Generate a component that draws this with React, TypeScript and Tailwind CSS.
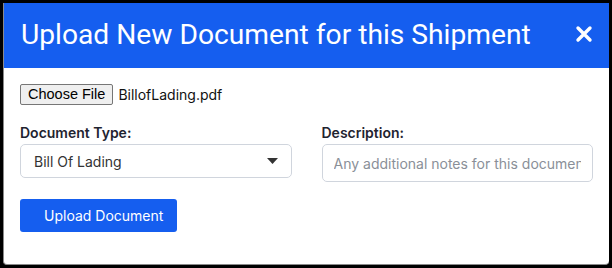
import React from 'react';

export default function App() {
    return (
        <div className="w-[612px] h-[268px] bg-black pt-[3px] pl-[3px] pr-[3px] pb-[3px]">
            <div className="h-full bg-white rounded-b-[4px] border-l border-b border-[#8a8a8a] flex flex-col overflow-hidden">
                {/* Header */}
                <div className="h-[65px] shrink-0 bg-[#155eef] flex items-center justify-between pl-[17px] pr-[16px]">
                    <h2 className="text-white text-[28.2px] leading-none font-normal font-['Roboto',sans-serif]">
                        Upload New Document for this Shipment
                    </h2>
                    <button className="text-white pb-1">
                        <svg width="18" height="18" viewBox="0 0 18 18">
                            <path d="M3 3 L15 15 M15 3 L3 15" stroke="white" strokeWidth="3.4" strokeLinecap="round" />
                        </svg>
                    </button>
                </div>

                {/* Body */}
                <div className="flex-1 px-[16px] pt-[16px] font-['Inter',sans-serif]">
                    <div className="flex items-center gap-[5px] h-[21px]">
                        <span className="h-[21px] px-[7px] flex items-center bg-[#efefef] border border-[#767676] rounded-[2px] text-[14.5px] text-black font-['Liberation_Sans',Arial,sans-serif]">
                            Choose File
                        </span>
                        <span className="text-[14px] text-[#111]">BillofLading.pdf</span>
                    </div>

                    <div className="grid grid-cols-2 gap-[30px] mt-[18px]">
                        <div>
                            <label className="block text-[14px] leading-[19px] font-semibold text-[#1f2430] mb-[2px]">Document Type:</label>
                            <div className="h-[34px] border border-[#d0d5dd] rounded-[5px] flex items-center justify-between pl-[13px] pr-[13px]">
                                <span className="text-[14px] text-[#333]">Bill Of Lading</span>
                                <svg width="11" height="6" viewBox="0 0 11 6">
                                    <path d="M0 0 L11 0 L5.5 6 Z" fill="#333" />
                                </svg>
                            </div>
                        </div>
                        <div>
                            <label className="block text-[14px] leading-[19px] font-semibold text-[#1f2430] mb-[2px]">Description:</label>
                            <input
                                type="text"
                                placeholder="Any additional notes for this document"
                                className="w-full h-[38px] border border-[#d0d5dd] rounded-[5px] px-[11px] text-[14px] placeholder:text-[#8a8f98] outline-none"
                            />
                        </div>
                    </div>

                    <button className="mt-[17px] h-[33px] bg-[#155eef] text-white rounded-[3px] pl-[24px] pr-[14px] text-[14px]">
                        Upload Document
                    </button>
                </div>
            </div>
        </div>
    );
}
